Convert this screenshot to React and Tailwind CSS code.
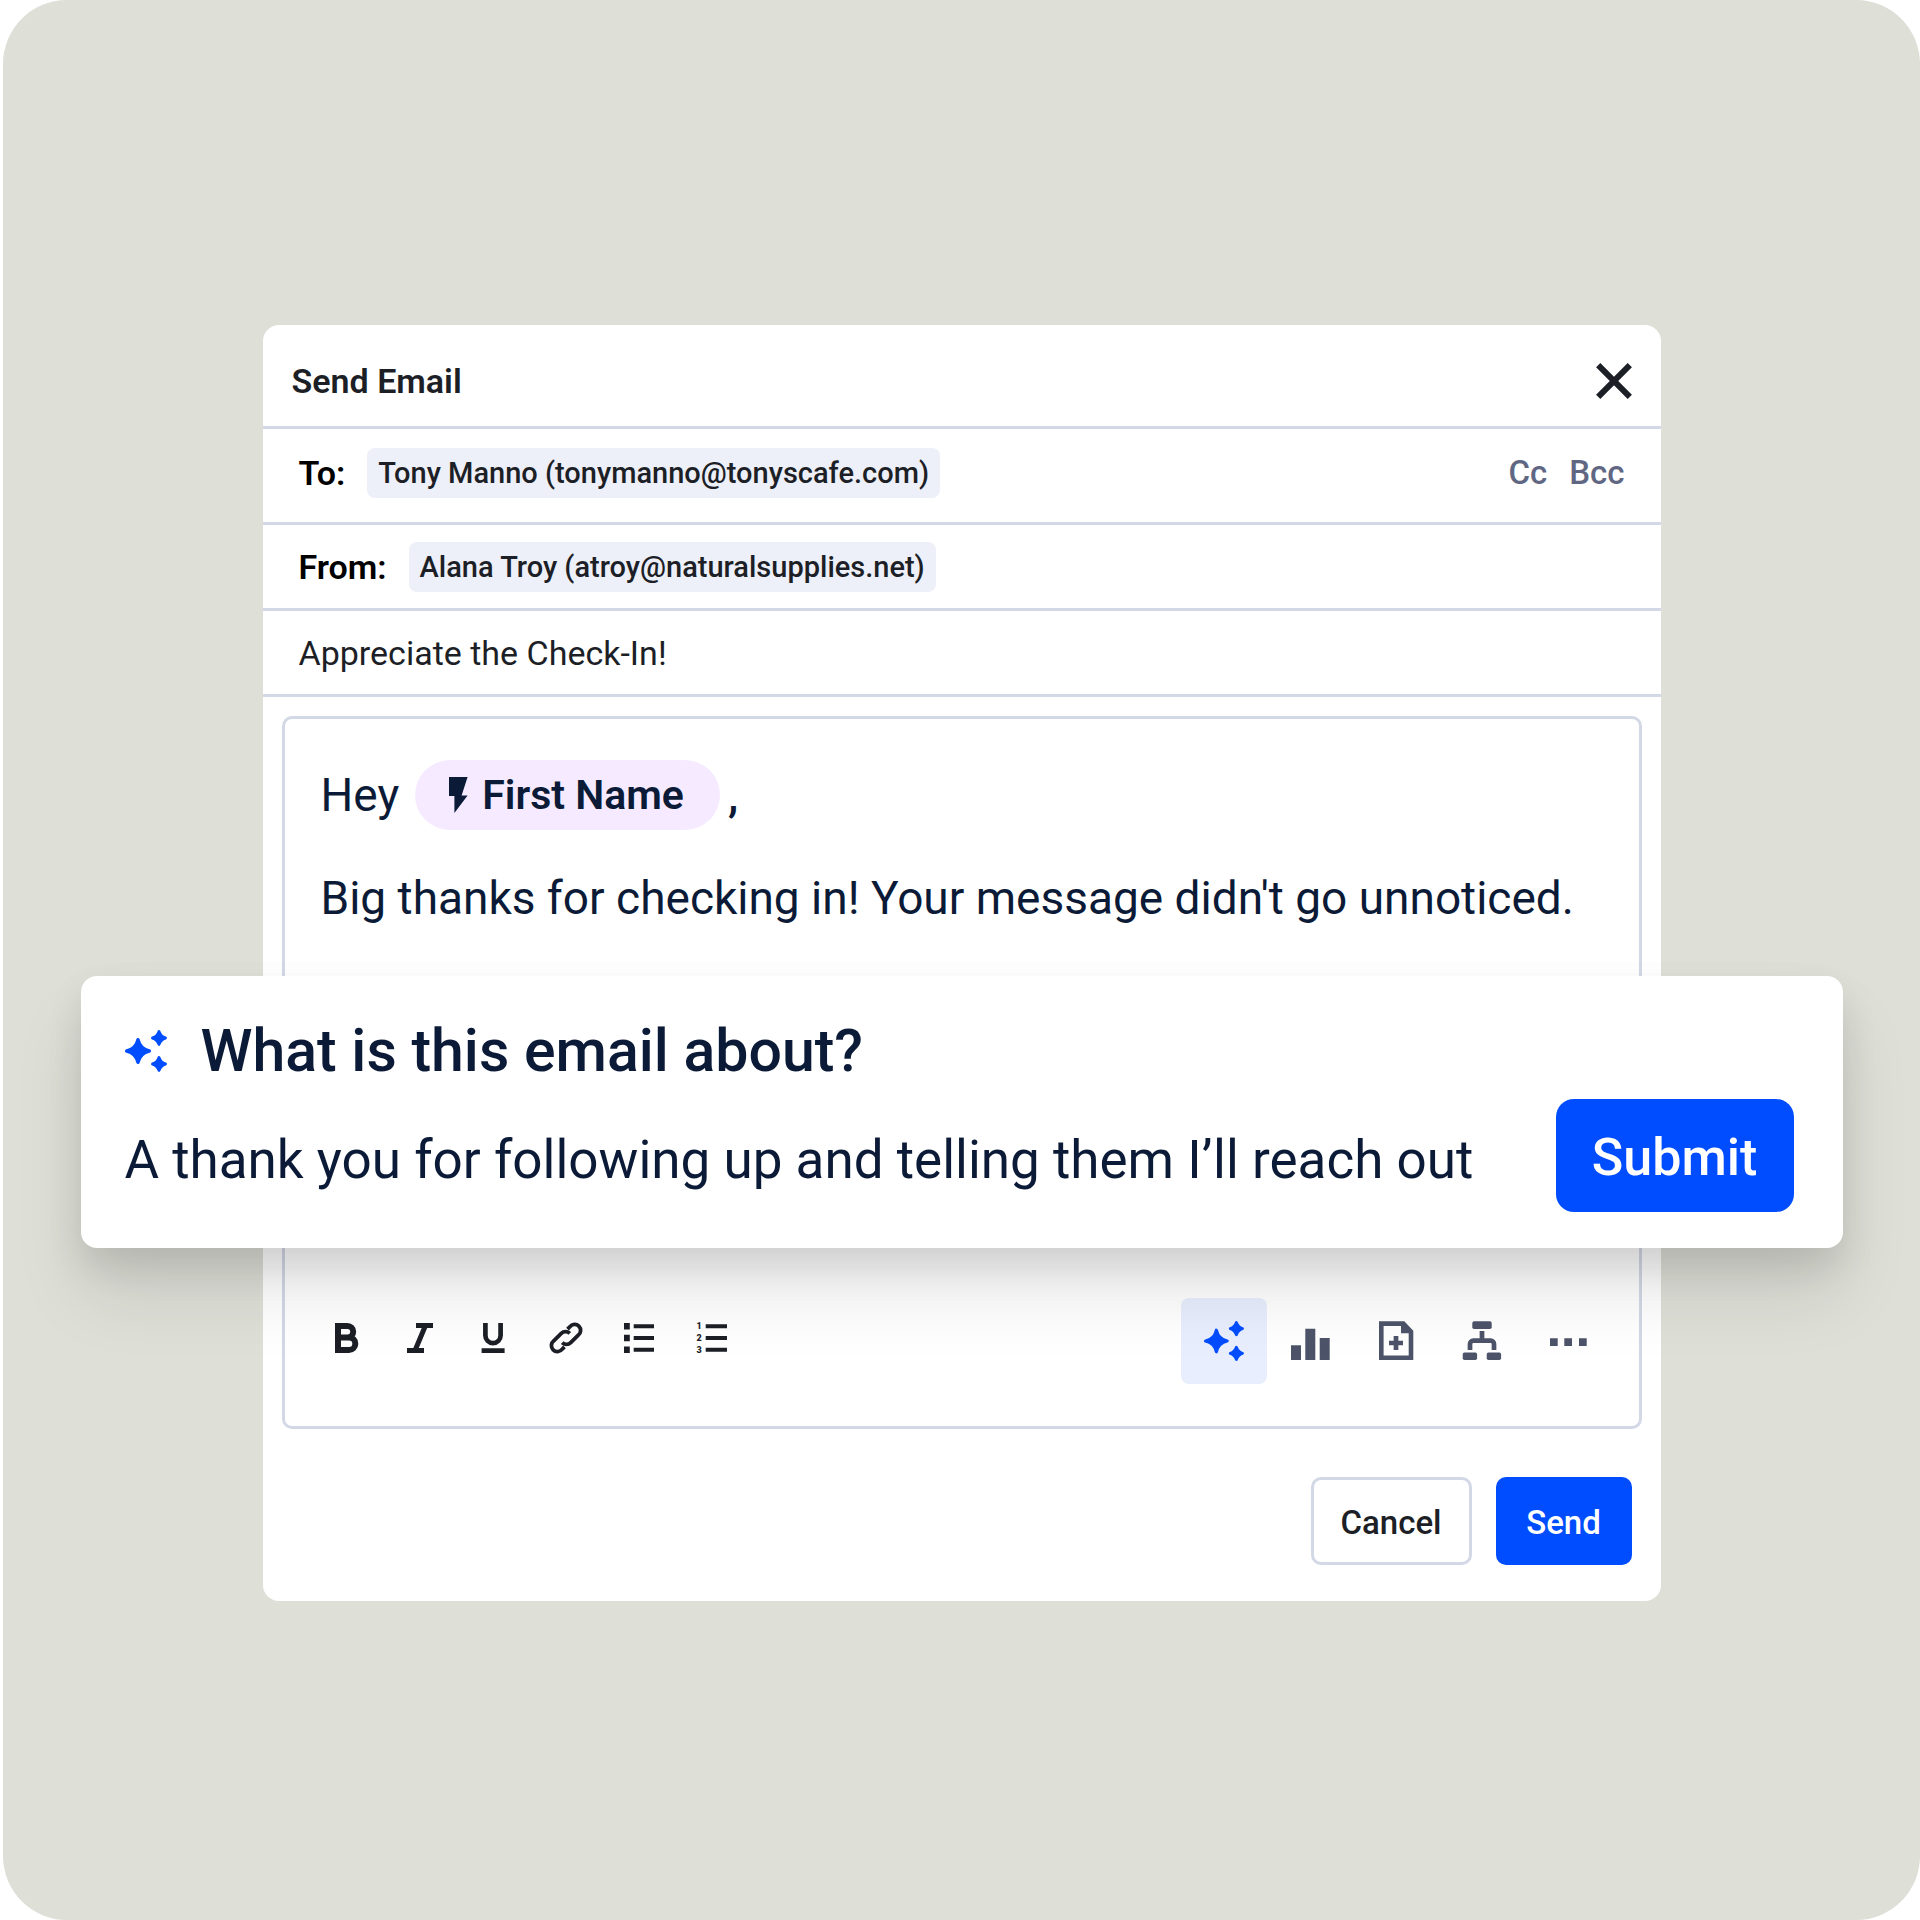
import React from 'react';
import clsx from 'clsx';

function Icon({ className = 'w-10 h-10', viewBox = '0 0 40 40', children }) {
  return (
    <svg className={className} viewBox={viewBox} fill="none" aria-hidden="true">
      {children}
    </svg>
  );
}

function SparkleIcon({ className }) {
  return (
    <Icon className={className} viewBox="0 0 42 42">
      <g fill="currentColor" stroke="currentColor" strokeLinejoin="round">
        <path strokeWidth="3.4" d="M13 9.7Q15.1 18.9 24.3 21Q15.1 23.1 13 32.3Q10.9 23.1 1.7 21Q10.9 18.9 13 9.7Z" />
        <path strokeWidth="3" d="M34 1.6Q35.6 6.4 40.4 8Q35.6 9.6 34 14.4Q32.4 9.6 27.6 8Q32.4 6.4 34 1.6Z" />
        <path strokeWidth="3" d="M34 27.6Q35.6 32.4 40.4 34Q35.6 35.6 34 40.4Q32.4 35.6 27.6 34Q32.4 32.4 34 27.6Z" />
      </g>
    </Icon>
  );
}

function BoldIcon() {
  return (
    <Icon>
      <path stroke="currentColor" strokeWidth="6" d="M11 8h9.5a5.7 5.7 0 0 1 0 11.4H11h11a6.3 6.3 0 0 1 0 12.6H11V8Z" />
    </Icon>
  );
}

function ItalicIcon() {
  return (
    <Icon>
      <path stroke="currentColor" strokeWidth="5" d="M16 7.5h17M7 32.5h17M25.5 7.5l-10.5 25" />
    </Icon>
  );
}

function UnderlineIcon() {
  return (
    <Icon>
      <path stroke="currentColor" strokeWidth="4.7" d="M12.4 5v12.5a7.6 7.6 0 0 0 15.2 0V5M8.6 32.6h23" />
    </Icon>
  );
}

function LinkIcon() {
  return (
    <Icon>
      <g stroke="currentColor" strokeWidth="3.8">
        <path d="M21.5 11.1L23.8 8.8A6 6 0 1 1 32.2 17.2L24.7 24.7A6 6 0 0 1 16.2 24.7" />
        <path d="M18.5 28.9L16.2 31.2A6 6 0 1 1 7.8 22.8L15.3 15.3A6 6 0 0 1 23.8 15.3" />
      </g>
    </Icon>
  );
}

function BulletListIcon() {
  return (
    <Icon>
      <path fill="currentColor" d="M5 5h5.8v6.4H5zM5 16.8h5.8v6.4H5zM5 28.6h5.8V35H5z" />
      <path stroke="currentColor" strokeWidth="4" d="M14.7 8.2H35M14.7 20H35M14.7 31.8H35" />
    </Icon>
  );
}

function NumberListIcon() {
  return (
    <Icon>
      <path stroke="currentColor" strokeWidth="4" d="M13.7 8.2H35M13.7 20H35M13.7 31.8H35" />
      <g fill="currentColor" fontFamily="Roboto, sans-serif" fontSize="9" fontWeight="900" textAnchor="middle">
        <text x="7" y="11.4">1</text>
        <text x="7" y="23.2">2</text>
        <text x="7" y="35">3</text>
      </g>
    </Icon>
  );
}

function ChartIcon() {
  return (
    <Icon>
      <path fill="currentColor" d="M1 24.3h10V39H1zM15.3 7.7h10V39h-10zM29.7 17h10v22h-10z" />
    </Icon>
  );
}

function FileAddIcon() {
  return (
    <Icon>
      <path fill="currentColor" fillRule="evenodd" d="M3 .3h25.3l9 9.4V39H3V.3ZM7.6 5v29.4h25.1V12.3H25V5H7.6Z" />
      <path stroke="currentColor" strokeWidth="4.7" d="M20 15v14M13 22h14" />
    </Icon>
  );
}

function WorkflowIcon() {
  return (
    <Icon>
      <g fill="currentColor">
        <rect x="10.3" y=".3" width="19.4" height="7.7" rx="1.8" />
        <rect x=".7" y="31.6" width="14.4" height="7.4" rx="1.8" />
        <rect x="24.7" y="31.6" width="14.4" height="7.4" rx="1.8" />
      </g>
      <path stroke="currentColor" strokeWidth="4.7" d="M20 10v9.6M8 29v-6a3.4 3.4 0 0 1 3.4-3.4h17.2A3.4 3.4 0 0 1 32 23v6" />
    </Icon>
  );
}

function MoreIcon() {
  return (
    <Icon>
      <path fill="currentColor" d="M2 17.3h7.7V25H2zM16.3 17.3H24V25h-7.7zM31 17.3h7.7V25H31z" />
    </Icon>
  );
}

function BoltIcon() {
  return (
    <Icon className="w-[19px] h-9" viewBox="0 0 19 36">
      <path fill="currentColor" d="M0 0h18.6l-6 18.6h6L5.4 36V19H0Z" />
    </Icon>
  );
}

function CloseIcon() {
  return (
    <Icon className="w-9 h-9" viewBox="0 0 36 36">
      <path stroke="currentColor" strokeWidth="6" d="M2.2 2.2l31.6 31.6M33.8 2.2L2.2 33.8" />
    </Icon>
  );
}

const FORMAT_TOOLS = [
  { label: 'Bold', icon: BoldIcon },
  { label: 'Italic', icon: ItalicIcon },
  { label: 'Underline', icon: UnderlineIcon },
  { label: 'Link', icon: LinkIcon },
  { label: 'Bulleted list', icon: BulletListIcon },
  { label: 'Numbered list', icon: NumberListIcon },
];

const INSERT_TOOLS = [
  { label: 'Write with AI', icon: SparkleIcon, active: true },
  { label: 'Insert poll', icon: ChartIcon },
  { label: 'Attach file', icon: FileAddIcon },
  { label: 'Insert workflow', icon: WorkflowIcon },
  { label: 'More', icon: MoreIcon },
];

function AddressRow({ label, address, className, children }) {
  return (
    <div className={clsx('flex items-center px-9 border-b-[3px] border-[#d3d8e6]', className)}>
      <span className="text-[34px] leading-10 font-semibold text-black">{label}</span>
      <span className="ml-[22px] px-[11px] rounded-lg bg-[#edf0f8] text-[29px] leading-[50px] font-medium whitespace-nowrap">
        {address}
      </span>
      {children}
    </div>
  );
}

function PromptPanel() {
  return (
    <form
      className="absolute -inset-x-[182px] top-[651px] h-[272px] pl-11 pr-[49px] pt-[38px] rounded-2xl bg-white text-[#0b1a36] shadow-[0_18px_36px_rgba(0,0,0,0.1),0_46px_70px_rgba(0,0,0,0.1)]"
      onSubmit={(e) => e.preventDefault()}
    >
      <div className="flex items-center gap-[34px]">
        <SparkleIcon className="w-[42px] h-[42px] text-[#004dff]" />
        <label htmlFor="prompt" className="text-[59px] leading-[74px] font-medium">
          What is this email about?
        </label>
      </div>
      <div className="flex items-center gap-8 mt-[11px]">
        <input
          id="prompt"
          className="flex-1 min-w-0 pt-2 text-[53px] leading-[72px] outline-none"
          defaultValue="A thank you for following up and telling them I’ll reach out"
        />
        <button type="submit" className="shrink-0 w-[238px] h-[113px] pt-1 rounded-[18px] bg-[#004dff] text-[52px] font-medium text-white">
          Submit
        </button>
      </div>
    </form>
  );
}

export default function App() {
  return (
    <div className="min-h-screen bg-white pl-[3px] font-[Roboto,sans-serif]">
      <main className="min-h-screen flex items-center justify-center px-[182px] pt-[6px] rounded-[64px] bg-[#dedfd7]">
        <section className="relative w-full max-w-[1398px] rounded-2xl bg-white text-[#1d1f27]">
          <header className="flex items-center justify-between h-[104px] pl-[29px] pr-[29px] pt-[10px] border-b-[3px] border-[#d3d8e6]">
            <h1 className="text-[34px] leading-10 font-semibold">Send Email</h1>
            <button type="button" aria-label="Close">
              <CloseIcon />
            </button>
          </header>

          <AddressRow label="To:" address="Tony Manno (tonymanno@tonyscafe.com)" className="h-24 pb-[6px]">
            <div className="ml-auto flex gap-[22px] text-[33px] leading-10 font-medium text-[#5f6783]">
              <button type="button">Cc</button>
              <button type="button">Bcc</button>
            </div>
          </AddressRow>
          <AddressRow label="From:" address="Alana Troy (atroy@naturalsupplies.net)" className="h-[86px]" />

          <input
            aria-label="Subject"
            className="block w-full h-[86px] px-9 border-b-[3px] border-[#d3d8e6] text-[34px] outline-none"
            defaultValue="Appreciate the Check-In!"
          />

          <div className="mx-[19px] mt-[19px] rounded-[10px] border-[3px] border-[#d3d8e6]">
            <div className="h-[579px] px-9 pt-[41px] text-[46px] text-[#0b1a36]">
              <p className="flex items-center leading-[70px]">
                Hey
                <span className="ml-4 mr-2 h-[70px] pl-[34px] pr-9 inline-flex items-center gap-[14px] rounded-full bg-[#f5eaff] text-[41px] font-semibold">
                  <BoltIcon />
                  First Name
                </span>
                <span className="font-medium">,</span>
              </p>
              <p className="mt-[33px] leading-[70px] whitespace-nowrap">
                Big thanks for checking in! Your message didn't go unnoticed.
              </p>
            </div>

            <div className="flex items-start justify-between pl-[42px] pr-[28px] pb-[42px]">
              <div className="flex gap-[33px] pt-5">
                {FORMAT_TOOLS.map(({ label, icon: ToolIcon }) => (
                  <button key={label} type="button" aria-label={label}>
                    <ToolIcon />
                  </button>
                ))}
              </div>
              <div className="flex text-[#4d546a]">
                {INSERT_TOOLS.map(({ label, icon: ToolIcon, active }) => (
                  <button
                    key={label}
                    type="button"
                    aria-label={label}
                    className={clsx('flex w-[86px] h-[86px] items-center justify-center rounded-lg', active && 'bg-[#e9eeff] text-[#004dff]')}
                  >
                    <ToolIcon />
                  </button>
                ))}
              </div>
            </div>
          </div>

          <footer className="flex justify-end gap-6 pt-12 pb-9 pr-[29px] text-[33px] font-medium">
            <button type="button" className="h-[88px] w-[161px] pt-[3px] rounded-[10px] border-[3px] border-[#d3d8e6]">
              Cancel
            </button>
            <button type="button" className="h-[88px] w-[136px] pt-[3px] rounded-[10px] bg-[#004dff] text-white">
              Send
            </button>
          </footer>

          <PromptPanel />
        </section>
      </main>
    </div>
  );
}
